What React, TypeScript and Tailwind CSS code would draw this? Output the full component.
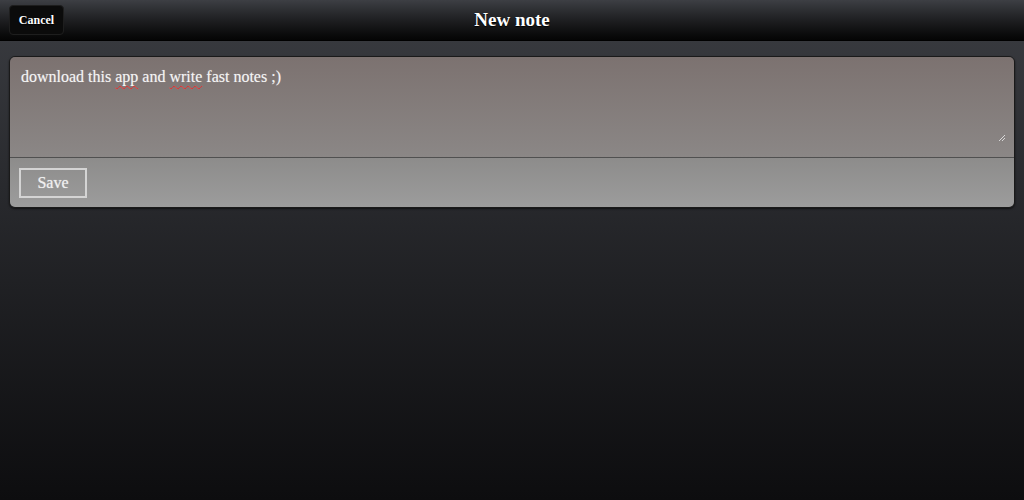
import React from "react";

export default function App() {
  return (
    <div
      className="w-[1024px] h-[500px] flex flex-col bg-gradient-to-b from-[#3b3d42] to-[#0d0d0f] overflow-hidden"
      style={{ fontFamily: '"Liberation Serif", "Times New Roman", serif' }}
    >
      <header className="h-[41px] flex items-center relative bg-gradient-to-b from-[#3d3f44] to-[#050505] border-b border-[#000]">
        <div className="pl-[9px]">
          <button className="h-[30px] w-[55px] rounded-[4px] bg-[#0b0b0b] border border-[#1e1e1e] text-white text-[12px] font-bold [text-shadow:0_1px_1px_#000]">
            Cancel
          </button>
        </div>
        <h1 className="absolute left-0 right-0 text-center text-white text-[19px] font-bold [text-shadow:0_1px_1px_#000] pointer-events-none">
          New note
        </h1>
      </header>
      <main className="px-[9px] pt-[15px]">
        <div className="rounded-[6px] border border-[#1a1a1a] overflow-hidden shadow-[0_1px_2px_rgba(0,0,0,0.6)]">
          <div className="relative h-[101px] bg-gradient-to-b from-[#7c7270] to-[#8b8786] border-b border-[#505050] px-[11px] pt-[9px]">
            <p className="text-[#f4f4f4] text-[16px] leading-[22px] [text-shadow:0_0_1px_rgba(255,255,255,0.4)]">
              download this{" "}
              <span className="underline decoration-wavy decoration-[#e02020] decoration-[1px] underline-offset-[3px]">app</span>{" "}
              and{" "}
              <span className="underline decoration-wavy decoration-[#e02020] decoration-[1px] underline-offset-[3px]">write</span>{" "}
              fast notes ;)
            </p>
            <svg className="absolute right-[8px] bottom-[15px]" width="8" height="8" viewBox="0 0 8 8">
              <line x1="1" y1="7" x2="7" y2="1" stroke="#d8d8d8" strokeWidth="1" />
              <line x1="4" y1="7" x2="7" y2="4" stroke="#d8d8d8" strokeWidth="1" />
            </svg>
          </div>
          <div className="h-[49px] bg-gradient-to-b from-[#8d8c8b] to-[#9c9c9c] px-[9px] pt-[10px]">
            <button className="h-[30px] w-[68px] border-2 border-[#d4d4d4] text-[#f0f0f0] text-[16px] [text-shadow:0_0_1px_rgba(255,255,255,0.6)]">
              Save
            </button>
          </div>
        </div>
      </main>
    </div>
  );
}
